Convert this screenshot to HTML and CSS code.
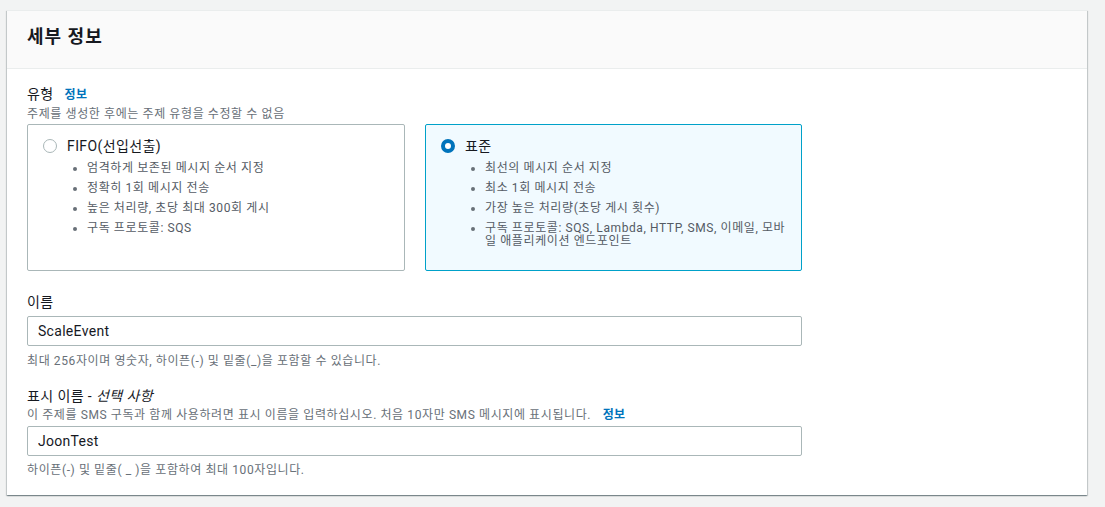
FILE: index.html
```html
<!DOCTYPE html>
<html lang="ko">
<head>
    <meta charset="UTF-8">
    <meta name="viewport" content="width=device-width, initial-scale=1.0">
    <title>세부 정보</title>
    <link rel="stylesheet" href="styles.css">
</head>
<body>
    <div class="container">
        <div class="header">
            <h2>세부 정보</h2>
        </div>

        <div class="content">
            <!-- 유형 -->
            <div class="field">
                <div class="label">유형 <a class="info" href="#">정보</a></div>
                <div class="desc">주제를 생성한 후에는 주제 유형을 수정할 수 없음</div>
                <div class="tiles">
                    <div class="tile">
                        <div class="tile-head">
                            <span class="radio"></span>
                            <span>FIFO(선입선출)</span>
                        </div>
                        <ul>
                            <li>엄격하게 보존된 메시지 순서 지정</li>
                            <li>정확히 1회 메시지 전송</li>
                            <li>높은 처리량, 초당 최대 300회 게시</li>
                            <li>구독 프로토콜: SQS</li>
                        </ul>
                    </div>
                    <div class="tile selected">
                        <div class="tile-head">
                            <span class="radio checked"></span>
                            <span>표준</span>
                        </div>
                        <ul>
                            <li>최선의 메시지 순서 지정</li>
                            <li>최소 1회 메시지 전송</li>
                            <li>가장 높은 처리량(초당 게시 횟수)</li>
                            <li>구독 프로토콜: SQS, Lambda, HTTP, SMS, 이메일, 모바일 애플리케이션 엔드포인트</li>
                        </ul>
                    </div>
                </div>
            </div>

            <!-- 이름 -->
            <div class="field">
                <div class="label">이름</div>
                <input type="text" class="input" value="ScaleEvent">
                <div class="hint">최대 256자이며 영숫자, 하이픈(-) 및 밑줄(_)을 포함할 수 있습니다.</div>
            </div>

            <!-- 표시 이름 -->
            <div class="field">
                <div class="label">표시 이름 - <i>선택 사항</i></div>
                <div class="desc">이 주제를 SMS 구독과 함께 사용하려면 표시 이름을 입력하십시오. 처음 10자만 SMS 메시지에 표시됩니다. <a class="info" href="#">정보</a></div>
                <input type="text" class="input" value="JoonTest">
                <div class="hint">하이픈(-) 및 밑줄( _ )을 포함하여 최대 100자입니다.</div>
            </div>
        </div>
    </div>
</body>
</html>
```

FILE: styles.css
```css
body {
    font-family: Roboto, "Noto Sans CJK KR", sans-serif;
    background-color: #f2f3f3;
    color: #16191f;
    margin: 0;
    padding: 10px 18px 10px 7px;
    letter-spacing: 0.4px;
}
.container {
    background-color: #fff;
    border-top: 1px solid #eaeded;
    box-shadow: 0 1px 1px 0 rgba(0, 28, 36, 0.3), 1px 1px 1px 0 rgba(0, 28, 36, 0.15), -1px 1px 1px 0 rgba(0, 28, 36, 0.15);
}
.header {
    background-color: #fafafa;
    border-bottom: 1px solid #eaeded;
    padding: 15px 20px 20px;
}
.header h2 {
    margin: 0;
    font-size: 18px;
    line-height: 22px;
    font-weight: 700;
    letter-spacing: 1px;
}
.content {
    padding: 14px 20px 17px;
}
.field {
    margin-bottom: 16px;
}
.field:first-child {
    margin-bottom: 20px;
}
.field:last-child {
    margin-bottom: 0;
}
.label {
    font-size: 14px;
    line-height: 22px;
}
.label i {
    font-style: italic;
}
.info {
    color: #0073bb;
    font-weight: 700;
    font-size: 12px;
    text-decoration: none;
    margin-left: 7px;
}
.desc, .hint {
    font-size: 12px;
    line-height: 16px;
    color: #687078;
    letter-spacing: 0.6px;
}
.desc .info {
    margin-left: 8px;
    letter-spacing: 0.4px;
}
.hint {
    margin-top: 7px;
}
.desc ~ .hint {
    margin-top: 6px;
}
.tiles {
    display: grid;
    grid-template-columns: 378px 377px;
    gap: 20px;
    margin-top: 2px;
}
.tile {
    border: 1px solid #aab7b8;
    border-radius: 2px;
    padding: 10px 15px 0;
    box-sizing: border-box;
    height: 147px;
}
.tile.selected {
    border-color: #00a1c9;
    background-color: #f1faff;
}
.tile-head {
    display: flex;
    align-items: center;
    gap: 10px;
    font-size: 14px;
    line-height: 22px;
}
.radio {
    width: 14px;
    height: 14px;
    border: 1px solid #aab7b8;
    border-radius: 50%;
    box-sizing: border-box;
    background-color: #fff;
}
.radio.checked {
    border: 4px solid #0073bb;
}
.tile ul {
    margin: 5px 0 0;
    padding-left: 44px;
    font-size: 12px;
    line-height: 13px;
    color: #545b64;
    letter-spacing: 0.6px;
}
.tile li {
    margin-bottom: 7px;
    word-break: break-all;
}
.tile li::marker {
    color: #687078;
}
.input {
    display: block;
    width: 775px;
    height: 30px;
    box-sizing: border-box;
    margin-top: 3px;
    padding: 0 10px;
    border: 1px solid #aab7b8;
    border-radius: 2px;
    font-family: inherit;
    font-size: 14px;
    letter-spacing: 0.3px;
    color: #16191f;
    background-color: #fff;
}
.desc + .input {
    margin-top: 3px;
}
```
